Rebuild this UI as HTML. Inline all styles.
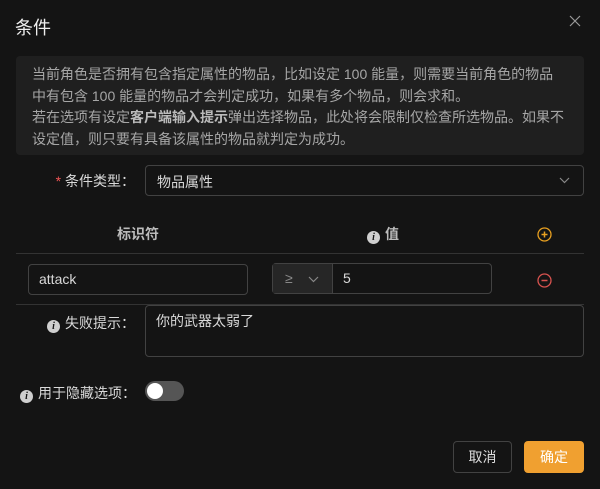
<!DOCTYPE html>
<html><head><meta charset="utf-8"><style>
*{margin:0;padding:0;box-sizing:border-box}
body{width:600px;height:489px;background:#141414;font-family:"Liberation Sans","Noto Sans CJK SC",sans-serif;color:#d9d9d9;position:relative;overflow:hidden;font-size:14px}
.a{position:absolute}
.inp{position:absolute;border:1px solid #424242;border-radius:4px;background:#141414}
.ic{display:inline-block;width:13px;height:13px;border-radius:50%;background:#cfcfcf;color:#141414;font:bold italic 10px/13px "Liberation Serif",serif;text-align:center;vertical-align:-1px;margin-right:5px}
</style></head><body>
<div class="a" style="left:15px;top:14px;font-size:18px;color:#eee">条件</div>
<svg class="a" style="left:569px;top:15px" width="12" height="12" viewBox="0 0 12 12"><path d="M1 1L11 11M11 1L1 11" stroke="#999" stroke-width="1.2"/></svg>
<div class="a" style="left:16px;top:56px;width:568px;height:99px;background:#1f1f1f;border-radius:4px;padding:8px 16px;color:#a6a6a6;line-height:21.5px;font-size:14px;white-space:nowrap">当前角色是否拥有包含指定属性的物品，比如设定 100 能量，则需要当前角色的物品<br>中有包含 100 能量的物品才会判定成功，如果有多个物品，则会求和。<br>若在选项有设定<b style="color:#bbb">客户端输入提示</b>弹出选择物品，此处将会限制仅检查所选物品。如果不<br>设定值，则只要有具备该属性的物品就判定为成功。</div>
<div class="a" style="left:45px;top:171px;width:90px;text-align:right"><span style="color:#e55">*</span> 条件类型：</div>
<div class="inp" style="left:145px;top:165px;width:439px;height:31px;padding:6px 11px">物品属性<svg style="position:absolute;right:13px;top:11px" width="11" height="7" viewBox="0 0 11 7"><path d="M1 1L5.5 5.5L10 1" stroke="#888" fill="none" stroke-width="1.2"/></svg></div>
<div class="a" style="left:117px;top:224px;color:#bbb;font-weight:bold">标识符</div>
<div class="a" style="left:367px;top:224px;color:#bbb;font-weight:bold"><span class="ic">i</span>值</div>
<svg class="a" style="left:537px;top:227px" width="15" height="15" viewBox="0 0 15 15"><circle cx="7.5" cy="7.5" r="6.5" stroke="#e8a020" fill="none" stroke-width="1.3"/><path d="M7.5 4.5V10.5M4.5 7.5H10.5" stroke="#e8a020" stroke-width="1.5"/></svg>
<div class="a" style="left:16px;top:253px;width:568px;height:1px;background:#333"></div>
<div class="inp" style="left:28px;top:264px;width:220px;height:31px;padding:6px 10px">attack</div>
<div class="inp" style="left:272px;top:263px;width:220px;height:31px">
<div class="a" style="left:0;top:0;width:60px;height:29px;background:#262626;border-right:1px solid #424242;color:#888;padding:6px 12px">≥<svg style="position:absolute;left:35px;top:12px" width="11" height="7" viewBox="0 0 11 7"><path d="M1 1L5.5 5.5L10 1" stroke="#888" fill="none" stroke-width="1.2"/></svg></div>
<div class="a" style="left:70px;top:6px">5</div></div>
<svg class="a" style="left:537px;top:273px" width="15" height="15" viewBox="0 0 15 15"><circle cx="7.5" cy="7.5" r="6.5" stroke="#d9534f" fill="none" stroke-width="1.3"/><path d="M4.5 7.5H10.5" stroke="#d9534f" stroke-width="1.5"/></svg>
<div class="a" style="left:16px;top:304px;width:568px;height:1px;background:#333"></div>
<div class="a" style="left:45px;top:313px;width:90px;text-align:right"><span class="ic">i</span>失败提示：</div>
<div class="inp" style="left:145px;top:305px;width:439px;height:52px;padding:5px 10px">你的武器太弱了</div>
<div class="a" style="left:20px;top:383px"><span class="ic">i</span>用于隐藏选项：</div>
<div class="a" style="left:145px;top:381px;width:39px;height:20px;border-radius:10px;background:#555"><div style="position:absolute;left:2px;top:2px;width:16px;height:16px;border-radius:50%;background:#fff"></div></div>
<div class="inp" style="left:453px;top:441px;width:59px;height:32px;text-align:center;line-height:30px;color:#ddd">取消</div>
<div class="a" style="left:524px;top:441px;width:60px;height:32px;border-radius:4px;background:#f0a030;color:#fff;text-align:center;line-height:32px">确定</div>
</body></html>
